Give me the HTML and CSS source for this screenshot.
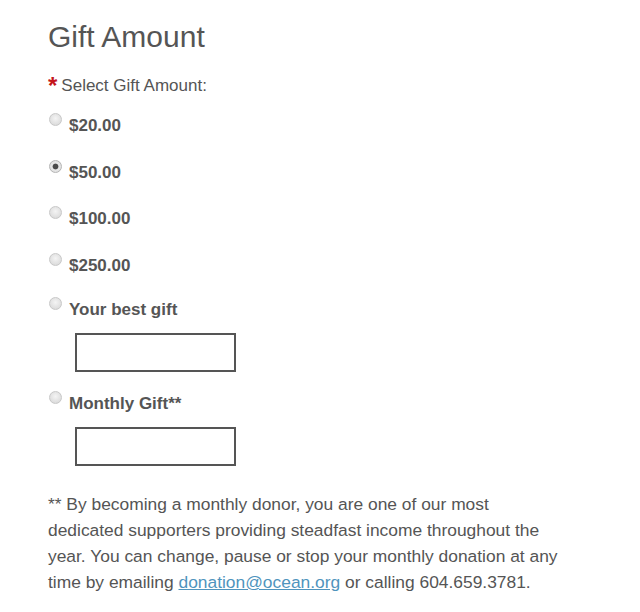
FILE: index.html
```html
<!DOCTYPE html>
<html>
<head>
<meta charset="utf-8">
<link rel="stylesheet" href="styles.css">
</head>
<body>
<div class="page">
  <h1 class="title">Gift Amount</h1>
  <div class="field-label"><span class="req">*</span><span>Select Gift Amount:</span></div>
  <div class="options">
    <label class="opt"><input type="radio" name="amt" class="radio"><span>$20.00</span></label>
    <label class="opt"><input type="radio" name="amt" class="radio" checked><span>$50.00</span></label>
    <label class="opt"><input type="radio" name="amt" class="radio"><span>$100.00</span></label>
    <label class="opt"><input type="radio" name="amt" class="radio"><span>$250.00</span></label>
    <label class="opt opt-other"><input type="radio" name="amt" class="radio"><span>Your best gift</span></label>
    <input type="text" class="amount-box">
    <label class="opt opt-monthly"><input type="radio" name="amt" class="radio"><span>Monthly Gift**</span></label>
    <input type="text" class="amount-box">
  </div>
  <p class="note">** By becoming a monthly donor, you are one of our most dedicated supporters providing steadfast income throughout the year. You can change, pause or stop your monthly donation at any time by emailing <a href="#" class="link">donation@ocean.org</a> or calling 604.659.3781.</p>
</div>
</body>
</html>
```
FILE: styles.css
```css
html, body {
  margin: 0;
  padding: 0;
  background: #fff;
}
.page {
  padding: 19px 0 0 48px;
  font-family: "Liberation Sans", Arial, sans-serif;
  color: #555;
}
.title {
  margin: 0;
  font-size: 30px;
  line-height: 36px;
  font-weight: normal;
  color: #555;
}
.field-label {
  margin-top: 21px;
  font-size: 17px;
  line-height: 20px;
  display: flex;
  align-items: flex-start;
}
.req {
  color: #c4161c;
  font-weight: bold;
  font-size: 24px;
  line-height: 20px;
  margin-right: 4px;
}
.options {
  display: flex;
  flex-direction: column;
  align-items: flex-start;
  margin-top: 20px;
}
.opt {
  display: flex;
  align-items: flex-start;
  font-size: 17px;
  line-height: 20px;
  font-weight: bold;
  color: #555;
  height: 20px;
  margin-bottom: 26.5px;
}
.opt-other {
  margin-top: -2px;
  margin-bottom: 13px;
}
.opt-monthly {
  margin-top: 22px;
  margin-bottom: 13px;
}
.radio {
  appearance: none;
  -webkit-appearance: none;
  width: 13px;
  height: 13px;
  margin: -3px 7px 0 1px;
  border: 1px solid #c8c8c8;
  border-radius: 50%;
  background: radial-gradient(circle at 50% 40%, #f4f4f4 0%, #dedede 70%, #d0d0d0 100%);
  box-sizing: border-box;
  flex: none;
}
.radio:checked {
  background: radial-gradient(circle, #4a4a4a 0, #4a4a4a 2.5px, #e8e8e8 3.3px, #dadada 100%);
  border-color: #b5b5b5;
}
.amount-box {
  margin-left: 27px;
  width: 161px;
  height: 39px;
  box-sizing: border-box;
  border: 2px solid #555;
  background: #fff;
  padding: 0;
}
.note {
  margin: 25px 0 0 0;
  width: 512px;
  font-size: 17.4px;
  line-height: 26px;
  color: #555;
}
.link {
  color: #4f94bd;
  text-decoration: underline;
}
```
